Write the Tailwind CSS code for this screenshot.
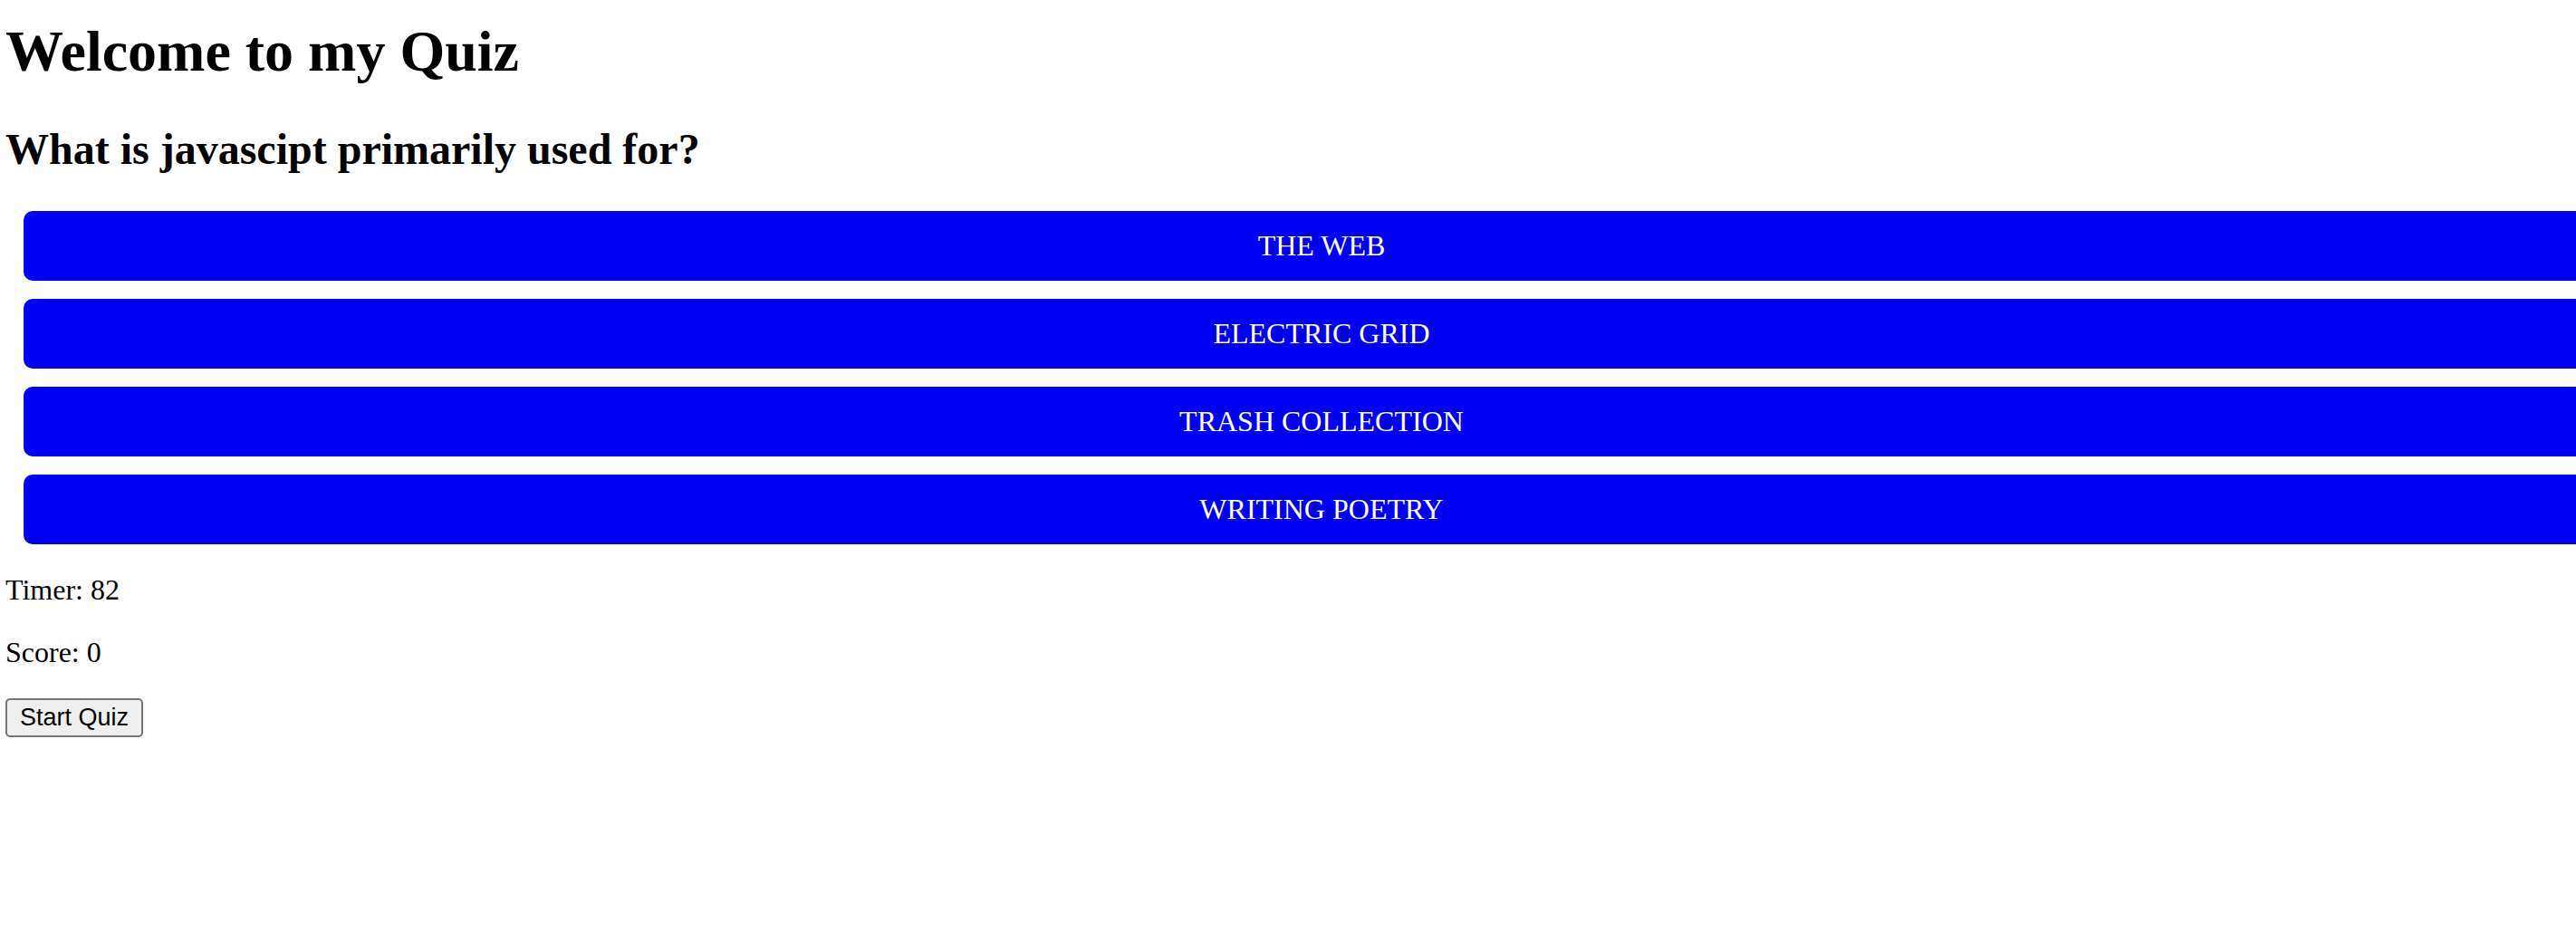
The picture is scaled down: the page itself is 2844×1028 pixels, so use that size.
<!DOCTYPE html>
<html lang="en">
<head>
<meta charset="utf-8">
<title>Quiz</title>
<script src="https://cdn.jsdelivr.net/npm/@tailwindcss/browser@4"></script>
</head>
<body class="overflow-x-hidden bg-white pl-[6px] pt-[20px] font-['Liberation_Serif',serif] text-[32px] leading-[37px] text-black">
  <h1 class="text-[64px] leading-[74px] font-bold">Welcome to my Quiz</h1>
  <h2 class="mt-[43px] text-[48px] leading-[55px] font-bold">What is javascipt primarily used for?</h2>
  <div class="mt-[41px] ml-[20px] -mr-[48px] flex flex-col gap-[20px] text-white">
    <button class="rounded-[10px] bg-[#0000f5] p-[20px]">THE WEB</button>
    <button class="rounded-[10px] bg-[#0000f5] p-[20px]">ELECTRIC GRID</button>
    <button class="rounded-[10px] bg-[#0000f5] p-[20px]">TRASH COLLECTION</button>
    <button class="rounded-[10px] bg-[#0000f5] p-[20px]">WRITING POETRY</button>
  </div>
  <p class="mt-[32px]">Timer: 82</p>
  <p class="mt-[32px]">Score: 0</p>
  <button class="mt-[32px] block rounded-[5px] border-2 border-[#767676] bg-[#efefef] px-[14px] py-px font-['Liberation_Sans',sans-serif] text-[27px]">Start Quiz</button>
</body>
</html>
